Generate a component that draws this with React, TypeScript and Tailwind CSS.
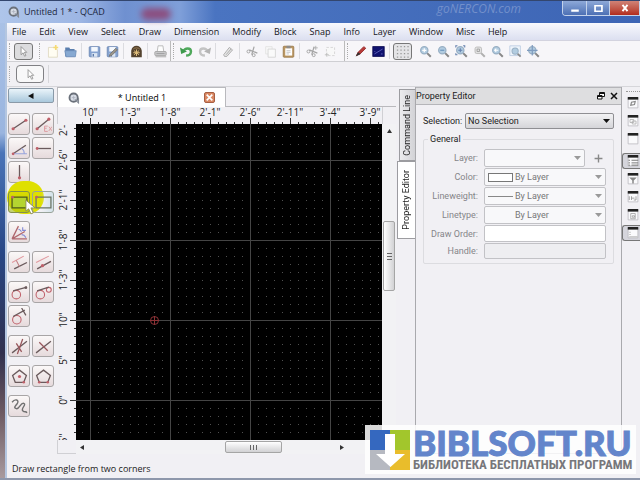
import { useState } from 'react'
import type { ReactNode } from 'react'

const MENUS = ['File', 'Edit', 'View', 'Select', 'Draw', 'Dimension', 'Modify', 'Block', 'Snap', 'Info', 'Layer', 'Window', 'Misc', 'Help']

const H_LABELS = ['10"', '1\'-3"', '1\'-8"', '2\'-1"', '2\'-6"', '2\'-11"', '3\'-4"', '3\'-9"']
const V_LABELS = ['2\'-6"', '2\'-1"', '1\'-8"', '1\'-3"', '10"', '5"', '0"', '-5"']

function Icon({ children, size = 16 }: { children: ReactNode; size?: number }) {
  return (
    <svg width={size} height={size} viewBox="0 0 16 16" fill="none" className="block shrink-0">
      {children}
    </svg>
  )
}

const Pointer = () => (
  <Icon size={13}>
    <path d="M5 2v10l2.500-2.400 1.800 4.200 1.700-.8-1.900-4H12z" fill="#fff" stroke="#8a8a8a" strokeWidth="1" />
  </Icon>
)

const Logo = () => (
  <Icon size={12}>
    <circle cx="7.500" cy="7.500" r="5.500" stroke="#6a707a" strokeWidth="2.500" fill="#d8dde6" />
    <path d="M7.500 5v5M5 7.500h5" stroke="#a8afbb" />
    <path d="M9 10l5 4.500V8" stroke="#858b96" strokeWidth="1.500" />
  </Icon>
)

const floppy = (
  <>
    <rect x="1.500" y="2" width="13" height="12.500" rx="1" fill="#86a3d0" stroke="#6985b3" />
    <rect x="4" y="2.500" width="8" height="5.500" fill="#f4f8fd" />
    <rect x="4.500" y="10" width="7" height="4.500" fill="#dce6f3" />
    <path d="M6.500 11v3" stroke="#4e6c9e" strokeWidth="1.500" />
  </>
)

const scissors = (
  <>
    <path d="M4 6l10 4M10 2L7 12" stroke="#a5a5a5" strokeWidth="1.500" />
    <circle cx="3" cy="8" r="1.800" stroke="#999" />
    <circle cx="9.500" cy="12.500" r="1.800" stroke="#999" />
  </>
)

// main toolbar, null is a separator
const FILE_TOOLS: [string, ReactNode][] = [
  ['New', <><path d="M3 3h8l3 3v9H3z" fill="#fffdf2" stroke="#ddd6bd" /><path d="M12 0v6M9 3h6" stroke="#f5da74" strokeWidth="2" /></>],
  ['Open', <><path d="M1.500 3h5l1 2H13v9H1.500z" fill="#5b7fae" /><path d="M1 7h14l-1 7.500H2.500z" fill="#87a9d2" stroke="#6c8db8" /></>],
  ['', null],
  ['Save', floppy],
  ['Save As', <>{floppy}<path d="M5 11l7-7 2 2-7 7-3 1z" fill="#9a9488" stroke="#666" strokeWidth=".8" /></>],
  ['', null],
  ['SVG Export', <><path d="M1.500 15V7C2 3 5 1 8 1s6 2 6.500 6v8z" fill="#54432f" /><path d="M5 7l6 5M11 7l-6 5M8 5.500v8M4 9.500h8" stroke="#e3c07c" strokeWidth="1.200" /><path d="M4 5c2-2 6-2 8 0" stroke="#a8875a" /></>],
  ['', null],
  ['Print', <><path d="M4 8L5 1h6l1 7" fill="#fdfdfd" stroke="#b0b0b0" /><rect x="1" y="8" width="14" height="5" rx="1" fill="#c8c8ca" stroke="#a0a0a0" /><path d="M3 10.500h10M2 14.500h13" stroke="#999" /></>],
]

const EDIT_TOOLS: [string, ReactNode][] = [
  ['Undo', <><path d="M4 8c2-5 9.500-5 9.500 0 0 3-2.500 5-6 5" stroke="#4fa85b" strokeWidth="3" /><path d="M0 3l1.500 8 7-3z" fill="#3f9a4e" /></>],
  ['Redo', <><path d="M12 8c-2-5-9.500-5-9.500 0 0 3 2.500 5 6 5" stroke="#c4c4c4" strokeWidth="3" /><path d="M16 3l-1.500 8-7-3z" fill="#b4b4b4" /></>],
  ['', null],
  ['Delete', <path d="M2 12L9 3l4 3-7 8H3zM5 12l6-7" fill="#e6e6e6" stroke="#a0a0a0" />],
  ['', null],
  ['Cut', scissors],
  ['Copy', <><path d="M2 2h8v9H2z" fill="#f7f7f7" stroke="#e2e2e2" /><path d="M5 5h9v10H5z" fill="#fafafa" stroke="#d2d2d2" /></>],
  ['Paste', <><rect x="1.500" y="1.500" width="13" height="13.500" rx="1" fill="#bb9762" stroke="#997748" /><path d="M4 4h8.500v9H4z" fill="#fff" /><path d="M5.500 1h5v3h-5z" fill="#8c8c8c" /><path d="M5.500 7h5M5.500 9h5M5.500 11h3" stroke="#bbb" /></>],
  ['', null],
  ['Cut with Reference', <>{scissors}<path d="M12 1v5M9.500 3.500h5" stroke="#aaa" /></>],
  ['Copy with Reference', <><path d="M3 3h10v10H3z" fill="#f8f8f8" stroke="#d0d0d0" strokeDasharray="3 2" /><path d="M1 12h5M3.500 9.500v5" stroke="#bbb" /></>],
]

const VIEW_TOOLS: [string, ReactNode][] = [
  ['Draft Mode', <><path d="M3 13l2-4 7-7 2.500 2-7 7z" fill="#b93a38" stroke="#8d2424" /><path d="M2 14l3-5 3 2z" fill="#333" /></>],
  ['Screen Lineweights', <><rect x="1" y="2" width="14" height="12" fill="#10126f" stroke="#070850" /><path d="M3 11l10-6M3 8h1M11 11h2" stroke="#6a6fc6" /></>],
  ['', null],
]

const lens = (
  <>
    <path d="M10 10l4.500 4.500" stroke="#888" strokeWidth="2.500" />
    <circle cx="6.500" cy="6.500" r="4.500" fill="#b2cce0" stroke="#98afc4" strokeWidth="1.500" />
  </>
)

const ZOOM_TOOLS: [string, ReactNode][] = [
  ['Zoom In', <>{lens}<path d="M4 6.500h5M6.500 4v5" stroke="#fff" strokeWidth="1.500" /></>],
  ['Zoom Out', <>{lens}<path d="M4 6.500h5" stroke="#6d97be" strokeWidth="1.500" /></>],
  ['Auto Zoom', <>{lens}<path d="M1 3V1h2M10 1h2v2M1 10v2h2M4 6.500h5M6.500 4v5" stroke="#6480ad" strokeWidth="1.300" /></>],
  ['Zoom to Selection', <><path d="M10 10l4.500 4.500" stroke="#b0b0b0" strokeWidth="2.500" /><rect x="2.500" y="2.500" width="8" height="8" rx="2" fill="#e2e2e2" stroke="#b5b5b5" /><path d="M5 5h3v3H5z" stroke="#999" /></>],
  ['Previous View', <>{lens}<path d="M9 6.500H4.500M6.500 4.500l-2 2 2 2" stroke="#fff" strokeWidth="1.300" /></>],
  ['Window Zoom', <><path d="M1 1h13v12H1z" fill="#eef4fb" stroke="#b9cae0" /><g transform="translate(2 2) scale(.85)">{lens}</g></>],
  ['Pan Zoom', <>{lens}<path d="M6.500 0v13M0 6.500h13" stroke="#7f9cbf" strokeWidth="1.500" /></>],
]

function Handle() {
  return <span className="mx-[2px] h-[16px] w-[2px] shrink-0 border-l border-dotted border-[#aaa]" />
}

function Tools({ items }: { items: [string, ReactNode][] }) {
  return (
    <>
      {items.map(([label, art], i) =>
        art === null ? (
          <span key={i} className="mx-[2px] h-[16px] w-[2px] shrink-0 border-l border-[#dcdce0]" />
        ) : (
          <button key={i} aria-label={label} className="flex h-[18px] w-[18px] shrink-0 items-center justify-center">
            <Icon size={13}>{art}</Icon>
          </button>
        ),
      )}
    </>
  )
}

const RED = '#c0606a'
const INK = '#6a5a5c'

// drawing tools of the palette, grouped as they are spaced
const PALETTE: [string, ReactNode][][] = [
  [
    ['Line from 2 points', <><path d="M2 12L14 4" stroke={INK} strokeWidth="1.200" /><circle cx="2" cy="12" r="1.500" fill={RED} /><circle cx="14" cy="4" r="1.500" fill={RED} /></>],
    ['Line with relative coordinates', <><path d="M2 12L13 3" stroke={INK} strokeWidth="1.200" /><circle cx="2" cy="12" r="1.500" fill={RED} /><circle cx="13" cy="3" r="1.500" fill={RED} /><path d="M9 9.500h3M9 11.500h2M9 9.500v5h3M13 10l3 4M16 10l-3 4" stroke="#dc9a9f" strokeWidth=".9" /></>],
    ['Line with angle', <><path d="M2 13L14 5" stroke={INK} strokeWidth="1.200" /><path d="M2 13h13M10 8c2 1 2.500 3 2.500 5" stroke="#98a4dc" /><circle cx="2" cy="13" r="1.300" fill={RED} /></>],
    ['Horizontal line', <><path d="M2 8h13" stroke={INK} strokeWidth="1.200" /><circle cx="2" cy="8" r="1.300" fill={RED} /></>],
    ['Vertical line', <><path d="M8 1v13" stroke={INK} strokeWidth="1.200" /><circle cx="8" cy="13" r="1.500" fill={RED} /></>],
  ],
  [
    ['Rectangle from 2 corners', <><path d="M1 3h14v10H1z" stroke="#4d5a1c" strokeWidth="1.200" fill="#b4d430" /><circle cx="1.500" cy="3" r="1.300" fill={RED} /></>],
    ['Rectangle with size', <><path d="M1 3h14v10H1z" stroke="#6b7464" strokeWidth="1.200" /><circle cx="1.500" cy="3" r="1.300" fill={RED} /></>],
  ],
  [['Bisector', <><path d="M1 14L7 2M1 14L13 7M1 14h14" stroke="#b0666d" strokeWidth="1.200" /><path d="M7 5c2 0 2 2 3 2M11 3v3h3M10 10c3 0 3 1 4 3" stroke="#8088d4" /></>]],
  [
    ['Parallel line', <><path d="M1 8l11-6" stroke="#e0969c" /><path d="M3 14l12-6" stroke={INK} strokeWidth="1.300" /><path d="M5 6l3 6" stroke="#c07a7e" /></>],
    ['Parallel through point', <><path d="M1 8l12-6" stroke="#e0969c" /><path d="M2 14l13-7" stroke={INK} strokeWidth="1.300" /><circle cx="7" cy="11" r="1.500" fill={RED} /></>],
  ],
  [
    ['Tangent from point', <><circle cx="5" cy="10" r="4" stroke={RED} /><path d="M2 6.500L15 3" stroke={INK} strokeWidth="1.200" /><circle cx="14" cy="3.500" r="1.300" fill={INK} /></>],
    ['Tangent of 2 circles', <><circle cx="5" cy="10" r="4" stroke={RED} /><circle cx="13" cy="5.500" r="2.300" stroke={RED} /><path d="M2 6.500l11-3.500" stroke={INK} strokeWidth="1.200" /></>],
    ['Orthogonal tangent', <><circle cx="5.500" cy="11" r="4" stroke={RED} /><path d="M2 8L13 2M10 0l4 7" stroke={INK} strokeWidth="1.200" /></>],
  ],
  [
    ['Cross line', <><path d="M1 14L15 3" stroke={INK} strokeWidth="1.200" /><path d="M5 5l5 8M11 1L6 15" stroke="#98565b" strokeWidth="1.200" /></>],
    ['Orthogonal line', <><path d="M1 14L15 3" stroke={INK} strokeWidth="1.200" /><path d="M4 4l8 8" stroke="#98565b" strokeWidth="1.200" /></>],
  ],
  [
    ['Polygon from centre', <><path d="M8 2l6.500 5L12 13.500H4L1.500 7z" stroke={INK} strokeWidth="1.200" /><circle cx="8" cy="8" r="1.500" fill={RED} /><circle cx="12" cy="13.500" r="1.200" fill={RED} /></>],
    ['Polygon from side', <><path d="M8 2l6.500 5L12 13.500H4L1.500 7z" stroke={INK} strokeWidth="1.200" /><circle cx="4" cy="13.500" r="1.200" fill={RED} /><circle cx="12" cy="13.500" r="1.200" fill={RED} /></>],
  ],
  [['Freehand line', <path d="M1 4c3-4 7-2 5 1s-4 4-1 5 4-6 7-5-3 5-1 7 3 0 4 2" stroke="#707070" strokeWidth="1.300" />]],
]

const TOOL = 'relative flex h-[22px] items-center justify-center rounded-[3px] border border-[#a8a5a6] bg-gradient-to-b from-[#fbf8f8] to-[#e6dadc]'
const TOOL_HOVER = 'relative flex h-[22px] items-center justify-center rounded-[3px] border border-[#84904a] bg-gradient-to-b from-[#d2d600]/40 to-[#a4bc10]/60'
const TOOL_NEAR = 'relative flex h-[22px] items-center justify-center rounded-[3px] border border-[#98a39a] bg-gradient-to-r from-transparent from-40% to-[#d3e3ea]'

function TitleBar() {
  return (
    <header className="flex h-[23px] shrink-0 items-start border-t border-[#33466e] bg-[linear-gradient(90deg,#aec5ea_0,#9db6e4_80px,#6f90d0_125px,#7f9fd9_180px,#4a74c1_215px,#3d65b5_100%)] pl-[8px]">
      <span className="mt-[5px]"><Logo /></span>
      <h1 className="mt-[3px] ml-[4px] text-[9px] leading-[16px] text-[#1c2740]">Untitled 1 * - QCAD</h1>
      <span className="mt-[7px] ml-[36px] h-[12px] w-[30px] rounded-full bg-[#8b4f80] blur-[3px]" />
      <span className="mr-[41px] ml-auto text-[12px] leading-[16px] text-[#7390cb] italic">goNERCON.com</span>
      <div className="flex h-[15px] shrink-0 overflow-hidden rounded-bl-[4px] border border-t-0 border-[#c3d2ea]">
        <button aria-label="Minimize" className="flex w-[23px] items-center justify-center bg-gradient-to-b from-[#8ea9d8] to-[#4d70b4]">
          <Icon size={12}><path d="M3 10h10v3H3z" fill="#fff" /></Icon>
        </button>
        <button aria-label="Maximize" className="flex w-[23px] items-center justify-center border-l border-[#c3d2ea] bg-gradient-to-b from-[#8ea9d8] to-[#4d70b4]">
          <Icon size={11}><path d="M3 4h10v8H3z" stroke="#fff" strokeWidth="2.500" /></Icon>
        </button>
        <button aria-label="Close" className="flex w-[30px] items-center justify-center border-l border-[#c3d2ea] bg-gradient-to-b from-[#cf8377] to-[#b22a1c]">
          <Icon size={10}><path d="M4 3l8 10M12 3L4 13" stroke="#fff" strokeWidth="3" /></Icon>
        </button>
      </div>
    </header>
  )
}

function Palette() {
  return (
    <aside className="flex w-[50px] shrink-0 flex-col pt-[1px] pl-[1px]">
      <button aria-label="Back" className="flex h-[15px] w-[46px] items-center justify-center rounded-[2px] border border-[#8a9aa8] bg-gradient-to-b from-[#eaf4fa] to-[#a9c8dc]">
        <svg width="6" height="6" viewBox="0 0 6 6"><path d="M5.500 0v6L0 3z" fill="#111" /></svg>
      </button>
      <div className="mt-[10px] flex flex-col gap-[8px]">
        {PALETTE.map((group, g) => (
          <div key={g} className="relative grid w-[46px] grid-cols-2 gap-[2px]">
            {g === 1 && <span className="absolute -top-[10px] -left-[1px] h-[33px] w-[37px] rounded-full bg-[#dfe000]" />}
            {group.map(([label, art], i) => (
              <button key={label} aria-label={label} className={g !== 1 ? TOOL : i === 0 ? TOOL_HOVER : TOOL_NEAR}>
                <Icon size={17}>{art}</Icon>
              </button>
            ))}
            {g === 1 && (
              <svg className="absolute top-[8px] left-[17px]" width="11" height="16" viewBox="0 0 12 17">
                <path d="M1 1v12l3-2.500L6.500 16l2.500-1-2.500-5.500H11z" fill="#fff" stroke="#8b8b50" />
              </svg>
            )}
          </div>
        ))}
      </div>
    </aside>
  )
}

function Drawing() {
  return (
    <section className="flex min-w-0 flex-1 flex-col">
      {/* document tab */}
      <div className="flex h-[20px] shrink-0 items-stretch">
        <div role="tab" className="flex w-[169px] items-center border border-b-0 border-[#b9b9bd] bg-white pr-[10px] pl-[10px]">
          <Logo />
          <span className="flex-1 text-center text-[9px] leading-[14px] text-black">* Untitled 1</span>
          <button aria-label="Close tab" className="flex h-[11px] w-[11px] items-center justify-center rounded-[2px] border border-[#a75f43] bg-[#d98762]">
            <Icon size={9}><path d="M3 3l10 10M13 3L3 13" stroke="#fff" strokeWidth="3" /></Icon>
          </button>
        </div>
        <span className="flex-1 border-b border-[#b9b9bd]" />
      </div>

      <div className="grid min-h-0 flex-1 grid-cols-[19px_minmax(0,1fr)_14px] grid-rows-[17px_minmax(0,1fr)_14px]">
        <span className="border-l border-[#d0d0d4]" />
        <svg className="block h-full w-full overflow-visible" fontSize="10" fill="#222">
          <defs>
            <pattern id="h-ticks" width="40" height="17" x="14" patternUnits="userSpaceOnUse">
              <path d="M.5 11v6M8.500 15v2M16.500 15v2M24.500 15v2M32.500 15v2" stroke="#333" />
            </pattern>
          </defs>
          <rect width="100%" height="17" fill="url(#h-ticks)" />
          {H_LABELS.map((label, i) => (
            <text key={label} x={14 + i * 40} y="9" textAnchor="middle">{label}</text>
          ))}
        </svg>
        <span className="border-l border-[#d0d0d4]" />

        <svg className="block h-full w-full" fontSize="10" fill="#222">
          <defs>
            <pattern id="v-ticks" width="19" height="40" y="36" patternUnits="userSpaceOnUse">
              <path d="M13 .5h6M17 8.500h2M17 16.500h2M17 24.500h2M17 32.500h2" stroke="#333" />
            </pattern>
          </defs>
          <rect width="19" height="100%" fill="url(#v-ticks)" />
          <text transform="translate(10 12) rotate(-90)">2'-11"</text>
          {V_LABELS.map((label, i) => (
            <text key={label} transform={`translate(10 ${36 + i * 40}) rotate(-90)`} textAnchor="middle">{label}</text>
          ))}
        </svg>
        <svg className="block h-full w-full bg-black">
          <defs>
            <pattern id="dots" width="8" height="8" x="14" y="36" patternUnits="userSpaceOnUse">
              <rect width="1" height="1" fill="#505050" />
            </pattern>
            <pattern id="major" width="80" height="80" x="14" y="36" patternUnits="userSpaceOnUse">
              <path d="M.5 0v80M0 .5h80" stroke="#454545" />
            </pattern>
          </defs>
          <rect width="100%" height="100%" fill="url(#dots)" />
          <rect width="100%" height="100%" fill="url(#major)" />
          <g stroke="#8c3236" fill="none">
            <circle cx="78.500" cy="196.500" r="4" />
            <path d="M74 196.500h9M78.500 192v9" />
          </g>
        </svg>
        <div className="flex flex-col items-center bg-[#f2f2f4]">
          <svg className="mt-[5px]" width="5" height="4" viewBox="0 0 5 4"><path d="M0 4h5L2.500 0z" fill="#333" /></svg>
          <span className="mt-[88px] flex h-[70px] w-[12px] items-center justify-center rounded-[2px] border border-[#a5a5a5] bg-gradient-to-r from-white to-[#d2d2d4]">
            <svg width="5" height="7"><path d="M0 .5h5M0 3.500h5M0 6.500h5" stroke="#666" /></svg>
          </span>
        </div>

        <span className="border border-t-0 border-r-0 border-[#d0d0d4]" />
        <div className="flex items-center bg-[#f2f2f4] pr-[38px] pl-[4px]">
          <svg width="4" height="5" viewBox="0 0 4 5"><path d="M4 0v5L0 2.500z" fill="#333" /></svg>
          <span className="ml-[141px] flex h-[12px] w-[57px] items-center justify-center rounded-[2px] border border-[#a5a5a5] bg-gradient-to-b from-white to-[#d2d2d4]">
            <svg width="7" height="5"><path d="M.5 0v5M3.500 0v5M6.500 0v5" stroke="#666" /></svg>
          </span>
          <svg className="ml-auto" width="4" height="5" viewBox="0 0 4 5"><path d="M0 0v5l4-2.500z" fill="#333" /></svg>
        </div>
        <span />
      </div>
    </section>
  )
}

function Arrow({ dark }: { dark?: boolean }) {
  return (
    <svg className="pointer-events-none absolute right-[4px]" width="7" height="4" viewBox="0 0 7 4">
      <path d="M0 0h7L3.500 4z" fill={dark ? '#111' : '#9a9a9a'} />
    </svg>
  )
}

function Combo({ id, value, sample }: { id: string; value: string; sample?: ReactNode }) {
  return (
    <div className="relative flex min-w-0 flex-1 items-center">
      <select id={id} disabled className="h-[18px] w-full appearance-none rounded-[2px] border border-[#c2c2c6] bg-[#f8f8fa] pl-[30px] text-[#777]">
        <option>{value}</option>
      </select>
      <span className="pointer-events-none absolute left-[4px]">{sample}</span>
      <Arrow />
    </div>
  )
}

function Field({ id, label, children }: { id: string; label: string; children: ReactNode }) {
  return (
    <div className="flex items-center gap-[6px]">
      <label htmlFor={id} className="w-[54px] shrink-0 text-right text-[#858589]">{label}</label>
      {children}
    </div>
  )
}

function PropertyEditor() {
  const [selection, setSelection] = useState('No Selection')

  return (
    <section className="flex w-[207px] shrink-0 flex-col border-x border-b border-[#a9a9ad] font-['Roboto',sans-serif] text-[9px] leading-[14px]">
      <div className="flex h-[18px] shrink-0 items-center border-y border-[#b5b5b9] bg-[#dedee0] pr-[3px]">
        <h2 className="flex-1 text-[#222]">Property Editor</h2>
        <button aria-label="Float">
          <Icon size={8}><path d="M5 1h10v8H5zM5 3h10M1 7h9v7H1zM1 9h9" stroke="#111" strokeWidth="2" fill="#fff" /></Icon>
        </button>
        <button aria-label="Close" className="ml-[5px]">
          <Icon size={8}><path d="M2 2l12 12M14 2L2 14" stroke="#111" strokeWidth="3" /></Icon>
        </button>
      </div>
      <div className="flex flex-col px-[7px] pt-[8px]">
        <div className="flex items-center gap-[5px] text-[#222]">
          <label htmlFor="selection" className="w-[37px] shrink-0">Selection:</label>
          <div className="relative flex flex-1 items-center">
            <select
              id="selection"
              value={selection}
              onChange={e => setSelection(e.target.value)}
              className="h-[16px] w-full appearance-none rounded-[2px] border border-[#8f8f93] bg-gradient-to-b from-[#f2f2f4] to-[#d5d5d9] pl-[2px]"
            >
              <option>No Selection</option>
              <option>All</option>
            </select>
            <Arrow dark />
          </div>
        </div>
        <fieldset className="mt-[3px] flex flex-col gap-[1px] rounded-[2px] border border-[#dcdce0] pt-[3px] pr-[7px] pb-[4px]">
          <legend className="ml-[4px] px-[2px] text-[#222]">General</legend>
          <Field id="layer" label="Layer:">
            <Combo id="layer" value="" />
            <button aria-label="Add layer" className="mr-[3px] ml-[3px]">
              <Icon size={9}><path d="M8 1v14M1 8h14" stroke="#888" strokeWidth="2.500" /></Icon>
            </button>
          </Field>
          <Field id="color" label="Color:">
            <Combo id="color" value="By Layer" sample={<span className="block h-[9px] w-[25px] border border-[#777] bg-white" />} />
          </Field>
          <Field id="lineweight" label="Lineweight:">
            <Combo id="lineweight" value="By Layer" sample={<span className="block h-px w-[25px] bg-[#888]" />} />
          </Field>
          <Field id="linetype" label="Linetype:">
            <Combo id="linetype" value="By Layer" />
          </Field>
          <Field id="order" label="Draw Order:">
            <input id="order" className="h-[17px] min-w-0 flex-1 rounded-[2px] border border-[#c2c2c6] bg-white px-[3px]" />
          </Field>
          <Field id="handle" label="Handle:">
            <input id="handle" disabled className="h-[16px] min-w-0 flex-1 rounded-[2px] border border-[#c2c2c6] bg-[#eeeef1] px-[3px]" />
          </Field>
        </fieldset>
      </div>
    </section>
  )
}

const DOCKS: [string, boolean, ReactNode][] = [
  ['Part Library', false, <path d="M5 11l1-4 5-1-1 4z" stroke="#888" strokeWidth="1.500" />],
  ['Block List', false, <path d="M4 6h5v4H4zM7 8h5v4H7z" stroke="#aaa" />],
  ['Library Browser', false, null],
  ['Layer List', true, <path d="M2 7h2M6 7h9M2 10.500h2M6 10.500h9M2 13.500h2M6 13.500h9" stroke="#777" strokeWidth="1.300" />],
  ['Selection Filter', false, <path d="M3 6h10l-4 4v4H7v-4z" fill="#888" />],
  ['Command Line', false, <path d="M3 7v5M6 7v5M6 9.500h4M12 7v5H9" stroke="#888" />],
  ['Clipboard', false, <path d="M5 6h6v7H5zM7 9h3v2H7z" stroke="#999" />],
  ['Property Editor', true, <path d="M3 7h2M3 10h2M3 13h11" stroke="#aaa" />],
]

function DockBar() {
  return (
    <nav className="flex w-[18px] shrink-0 flex-col items-end gap-[2px] overflow-hidden pt-[4px]">
      <span className="h-[2px] w-[14px] border-t border-dotted border-[#999]" />
      {DOCKS.map(([label, active, art], i) => (
        <button
          key={label}
          aria-label={label}
          className={
            active
              ? 'flex h-[16px] w-[18px] items-center justify-end rounded-l-[3px] border border-r-0 border-[#777] bg-[#d5d5dc] pr-[1px]'
              : i === 2
                ? 'mb-[4px] flex h-[16px] w-[18px] items-center justify-end pr-[1px]'
                : 'flex h-[16px] w-[18px] items-center justify-end pr-[1px]'
          }
        >
          <Icon size={12}>
            <path d="M1.500 1.500h13v13h-13z" fill="#fafafc" stroke="#b5b5bb" />
            <path d="M1 0h14v3.500H1z" fill="#222" />
            {art}
          </Icon>
        </button>
      ))}
    </nav>
  )
}

function Watermark() {
  return (
    <div className="absolute right-[4px] bottom-[6px] flex h-[49px] w-[271px] items-center bg-white/85 pl-[5px]">
      <svg width="40" height="40" viewBox="0 0 40 40" className="shrink-0">
        <path d="M0 0h20v20H0z" fill="#3568bf" />
        <path d="M20 0h20v20H20z" fill="#a2c62c" />
        <path d="M0 20h20v20H0z" fill="#b6b9c1" />
        <path d="M20 20h20v20H20z" fill="#e9bd2b" />
        <path d="M15 4h10v20h10L20.500 37 6 24h9z" fill="#fff" />
      </svg>
      <div className="ml-[3px] whitespace-nowrap">
        <p className="font-['Lato',sans-serif] text-[35px] leading-[30px] font-black text-[#6385cb] [-webkit-text-stroke:1px_#6385cb]">BIBLSOFT.RU</p>
        <p className="font-['Roboto_Condensed','Roboto',sans-serif] text-[13px] leading-[15px] font-bold text-[#77777b]">БИБЛИОТЕКА БЕСПЛАТНЫХ ПРОГРАММ</p>
      </div>
    </div>
  )
}

export default function App() {
  return (
    <div className="relative flex h-screen flex-col overflow-hidden bg-[#f1f0f4] font-['Open_Sans',sans-serif]">
      <TitleBar />
      <div className="flex min-h-0 flex-1 border-b-2 border-[#8e97ab]">
        <div className="w-[7px] shrink-0 border-r-2 border-[#b4c6e0] bg-[linear-gradient(#a9c1e6_0,#9ab5df_110px,#4a74b8_130px,#274686_230px,#30304e_330px,#6d5a62_390px,#a89a9e_100%)]" />
        <div className="flex min-w-0 flex-1 flex-col">
          <nav className="flex h-[18px] shrink-0 items-center gap-[13px] border-b border-[#d3d3df] bg-gradient-to-b from-[#f8f9fd] to-[#dcdff0] pl-[5px] text-[9px] leading-[16px] text-[#15151c]">
            {MENUS.map(menu => (
              <button key={menu}>{menu}</button>
            ))}
          </nav>
          <div className="flex h-[21px] shrink-0 items-center border-b border-[#cfcfd3] bg-[#f7f6f9]">
            <Handle />
            <button aria-label="Reset" className="mr-[4px] ml-[1px] flex h-[17px] w-[19px] shrink-0 items-center justify-center rounded-[3px] border border-[#777] bg-[#dcdcde]">
              <Pointer />
            </button>
            <Handle />
            <Tools items={FILE_TOOLS} />
            <span className="h-full w-[2px] border-r border-[#bbb]" />
            <Handle />
            <Tools items={EDIT_TOOLS} />
            <span className="h-full w-[6px] border-r border-[#bbb]" />
            <Handle />
            <Tools items={VIEW_TOOLS} />
            <button aria-label="Grid" className="mr-[4px] flex h-[17px] w-[19px] shrink-0 items-center justify-center rounded-[3px] border border-[#777] bg-[#e4e4e6]">
              <Icon size={14}><path d="M1 3h15M1 7h15M1 11h15M1 15h15" stroke="#999" strokeDasharray="1.500 2.500" strokeWidth="1.500" /></Icon>
            </button>
            <Tools items={ZOOM_TOOLS} />
          </div>
          <div className="flex h-[25px] shrink-0 items-center border-b border-[#d6d6da]">
            <Handle />
            <button aria-label="Select" className="ml-[3px] flex h-[18px] w-[28px] items-center justify-center rounded-[4px] border border-[#808084] bg-[#f8f8f9]">
              <Pointer />
            </button>
            <span className="ml-[4px] h-[18px] border-l border-[#d6d6da]" />
          </div>
          <main className="flex min-h-0 flex-1">
            <Palette />
            <Drawing />
            <div className="flex w-[19px] shrink-0 flex-col items-end pt-[2px] font-['Roboto',sans-serif] text-[9px] leading-[13px] text-[#222]">
              <button className="flex h-[72px] w-[16px] items-center justify-center border border-r-0 border-[#9c9ca0] bg-gradient-to-r from-[#ececee] to-[#d2d2d6] whitespace-nowrap">
                <span className="rotate-180 [writing-mode:vertical-rl]">Command Line</span>
              </button>
              <button className="flex h-[78px] w-[18px] items-center justify-center border border-r-0 border-[#9c9ca0] bg-white whitespace-nowrap">
                <span className="rotate-180 [writing-mode:vertical-rl]">Property Editor</span>
              </button>
            </div>
            <PropertyEditor />
            <DockBar />
          </main>
          <footer className="flex h-[24px] shrink-0 items-center pt-[5px] pl-[5px] text-[9px] leading-[14px] text-[#222]">
            Draw rectangle from two corners
          </footer>
        </div>
      </div>
      <Watermark />
    </div>
  )
}
